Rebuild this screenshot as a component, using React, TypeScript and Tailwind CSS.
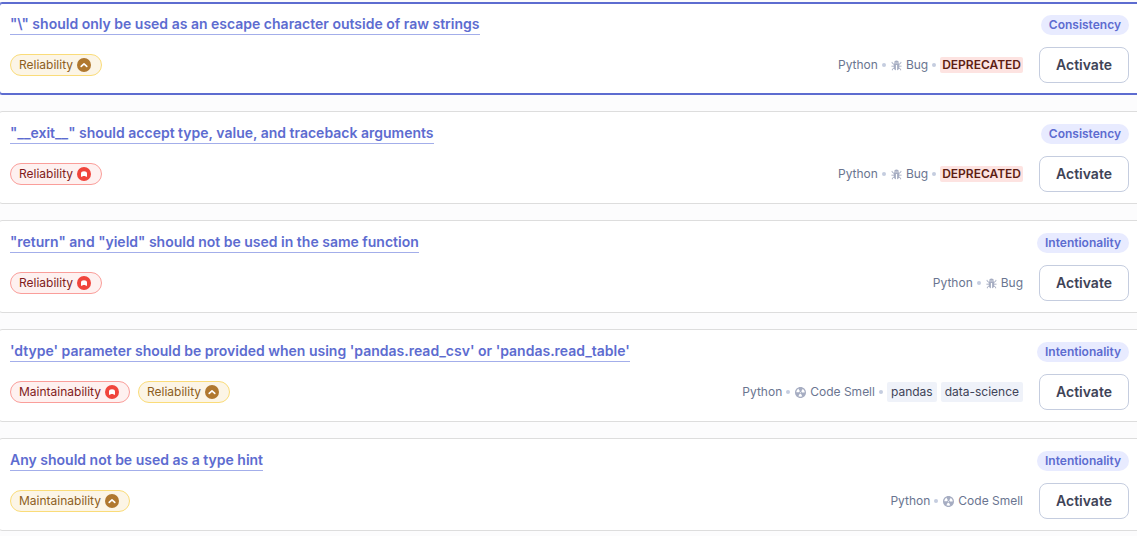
import React from "react";

type Severity = "medium" | "blocker";
type RuleType = "Bug" | "Code Smell";

interface Impact {
  quality: string;
  severity: Severity;
}

interface Rule {
  name: string;
  attribute: string;
  impacts: Impact[];
  type: RuleType;
  deprecated?: boolean;
  tags?: string[];
}

const rules: Rule[] = [
  {
    name: '"\\" should only be used as an escape character outside of raw strings',
    attribute: "Consistency",
    impacts: [{ quality: "Reliability", severity: "medium" }],
    type: "Bug",
    deprecated: true,
  },
  {
    name: '"__exit__" should accept type, value, and traceback arguments',
    attribute: "Consistency",
    impacts: [{ quality: "Reliability", severity: "blocker" }],
    type: "Bug",
    deprecated: true,
  },
  {
    name: '"return" and "yield" should not be used in the same function',
    attribute: "Intentionality",
    impacts: [{ quality: "Reliability", severity: "blocker" }],
    type: "Bug",
  },
  {
    name: "'dtype' parameter should be provided when using 'pandas.read_csv' or 'pandas.read_table'",
    attribute: "Intentionality",
    impacts: [
      { quality: "Maintainability", severity: "blocker" },
      { quality: "Reliability", severity: "medium" },
    ],
    type: "Code Smell",
    tags: ["pandas", "data-science"],
  },
  {
    name: "Any should not be used as a type hint",
    attribute: "Intentionality",
    impacts: [{ quality: "Maintainability", severity: "medium" }],
    type: "Code Smell",
  },
];

function SeverityIcon({ severity }: { severity: Severity }) {
  if (severity === "blocker") {
    return (
      <svg aria-hidden="true" viewBox="0 0 14 14" className="mb-px size-3.5">
        <circle cx="7" cy="7" r="7" fill="#f0453c" />
        <path
          d="M4 9.8V6.4C4 5 5.2 4.2 7 4.2s3 .8 3 2.2v3.4H9L8 9.1H6l-1 .7z"
          fill="#fff"
        />
      </svg>
    );
  }
  return (
    <svg aria-hidden="true" viewBox="0 0 14 14" className="mb-px size-3.5">
      <circle cx="7" cy="7" r="7" fill="#b0782f" />
      <path
        d="M4.2 8.4 7 5.8l2.8 2.6"
        fill="none"
        stroke="#fff"
        strokeWidth="1.6"
        strokeLinecap="round"
        strokeLinejoin="round"
      />
    </svg>
  );
}

function BugIcon() {
  return (
    <svg aria-hidden="true" viewBox="0 0 11 11" fill="currentColor" className="size-[11px]">
      <path d="M3.2 2.7C3.2 1.4 4.2.6 5.5.6s2.3.8 2.3 2.1z" />
      <path d="M2.8 3.3h5.4v4.2c0 1.5-.8 2.5-2.1 2.8V4.9H4.9v5.4C3.6 10 2.8 9 2.8 7.5z" />
      <path
        d="M3 4.4 1.1 3.1V1.9M8 4.4l1.9-1.3V1.9M3 6.2H.4M8 6.2h2.6M3.2 8 1.4 9v1.3M7.8 8l1.8 1v1.3"
        fill="none"
        stroke="currentColor"
        strokeWidth=".9"
      />
    </svg>
  );
}

function CodeSmellIcon() {
  return (
    <svg aria-hidden="true" viewBox="2 2 12 12" fill="currentColor" className="size-[11px]">
      <path
        fillRule="evenodd"
        d="M8 2C4.7 2 2 4.7 2 8s2.7 6 6 6 6-2.7 6-6-2.7-6-6-6zm-.5 5.5h.9v.9h-.9v-.9zm-3.8.2c-.1 0-.2-.1-.2-.2 0-.4.1-1.2.6-2S5.3 4.2 5.6 4c.2 0 .3 0 .3.1l1.3 2.3c0 .1 0 .2-.1.2-.1.2-.2.3-.3.5-.1.2-.2.4-.2.5 0 .1-.1.2-.2.2l-2.7-.1zM9.9 12c-.3.2-1.1.5-2 .5-.9 0-1.7-.3-2-.5-.1 0-.1-.2-.1-.3l1.3-2.3c0-.1.1-.1.2-.1.2.1.3.1.5.1s.4 0 .5-.1c.1 0 .2 0 .2.1l1.3 2.3c.2.2.2.3.1.3zm2.5-4.1L9.7 8c-.1 0-.2-.1-.2-.2 0-.2-.1-.4-.2-.5 0-.1-.2-.3-.3-.4-.1 0-.1-.1-.1-.2l1.3-2.3c.1-.1.2-.1.3-.1.3.2 1 .7 1.5 1.5s.6 1.6.6 2c0 0-.1.1-.2.1z"
      />
    </svg>
  );
}

function ImpactPill({ quality, severity }: Impact) {
  const tone =
    severity === "blocker"
      ? "border-[#fa9e9a] bg-[#fef1f0] text-[#801b1b]"
      : "border-[#fadc79] bg-[#fcf5e6] text-[#8c5e1e]";
  return (
    <li
      className={`flex h-[22px] items-center gap-1 rounded-full border pr-2.5 pl-2 text-xs ${tone}`}
    >
      {quality}
      <SeverityIcon severity={severity} />
    </li>
  );
}

function Dot() {
  return <span aria-hidden="true" className="size-1 rounded-full bg-[#c5cddf]" />;
}

function RuleMeta({ rule }: { rule: Rule }) {
  return (
    <div className="flex items-center gap-1 text-xs text-[#6a7590]">
      <span>Python</span>
      <Dot />
      <span className="flex items-center gap-1 pl-px">
        <span className="text-[#a6adc2]">
          {rule.type === "Bug" ? <BugIcon /> : <CodeSmellIcon />}
        </span>
        {rule.type}
      </span>
      {rule.deprecated && (
        <>
          <Dot />
          <span className="rounded-xs bg-[#fde3e1] px-0.5 font-semibold text-[#5d1d13]">
            DEPRECATED
          </span>
        </>
      )}
      {rule.tags && (
        <>
          <Dot />
          {rule.tags.map((tag) => (
            <span
              key={tag}
              className="rounded-xs bg-[#eff2f9] px-1 leading-5 text-[#3e4357]"
            >
              {tag}
            </span>
          ))}
        </>
      )}
    </div>
  );
}

function RuleCard({ rule, selected }: { rule: Rule; selected: boolean }) {
  const frame = selected
    ? "border-[#5d6cd0] ring-1 ring-inset ring-[#5d6cd0]"
    : "border-[#dddddd]";
  return (
    <li
      className={`flex flex-col gap-3 rounded-sm border bg-white px-[11px] pt-3 pb-[11px] ${frame}`}
    >
      <div className="flex items-start justify-between gap-4">
        <a
          href="#rule"
          className="border-b border-[#a3aeea] pb-px text-sm leading-[18px] font-semibold text-[#5d6cd0]"
        >
          {rule.name}
        </a>
        <span className="rounded-full bg-[#e8ebff] px-2 text-xs leading-5 font-semibold text-[#5d6cd0]">
          {rule.attribute}
        </span>
      </div>
      <div className="flex items-center justify-between gap-4">
        <ul className="flex gap-2">
          {rule.impacts.map((impact) => (
            <ImpactPill key={impact.quality} {...impact} />
          ))}
        </ul>
        <div className="flex items-center gap-4">
          <RuleMeta rule={rule} />
          <button
            type="button"
            className="h-9 rounded-lg border border-[#c5cddf] bg-white px-4 text-sm font-semibold text-[#3e4357]"
          >
            Activate
          </button>
        </div>
      </div>
    </li>
  );
}

export default function App() {
  return (
    <main className="min-h-screen overflow-hidden bg-[#fcfcfd] pt-0.5 font-['Inter',sans-serif]">
      <ul className="-mr-1 -ml-0.5 flex flex-col gap-4">
        {rules.map((rule, index) => (
          <RuleCard key={rule.name} rule={rule} selected={index === 0} />
        ))}
      </ul>
    </main>
  );
}
